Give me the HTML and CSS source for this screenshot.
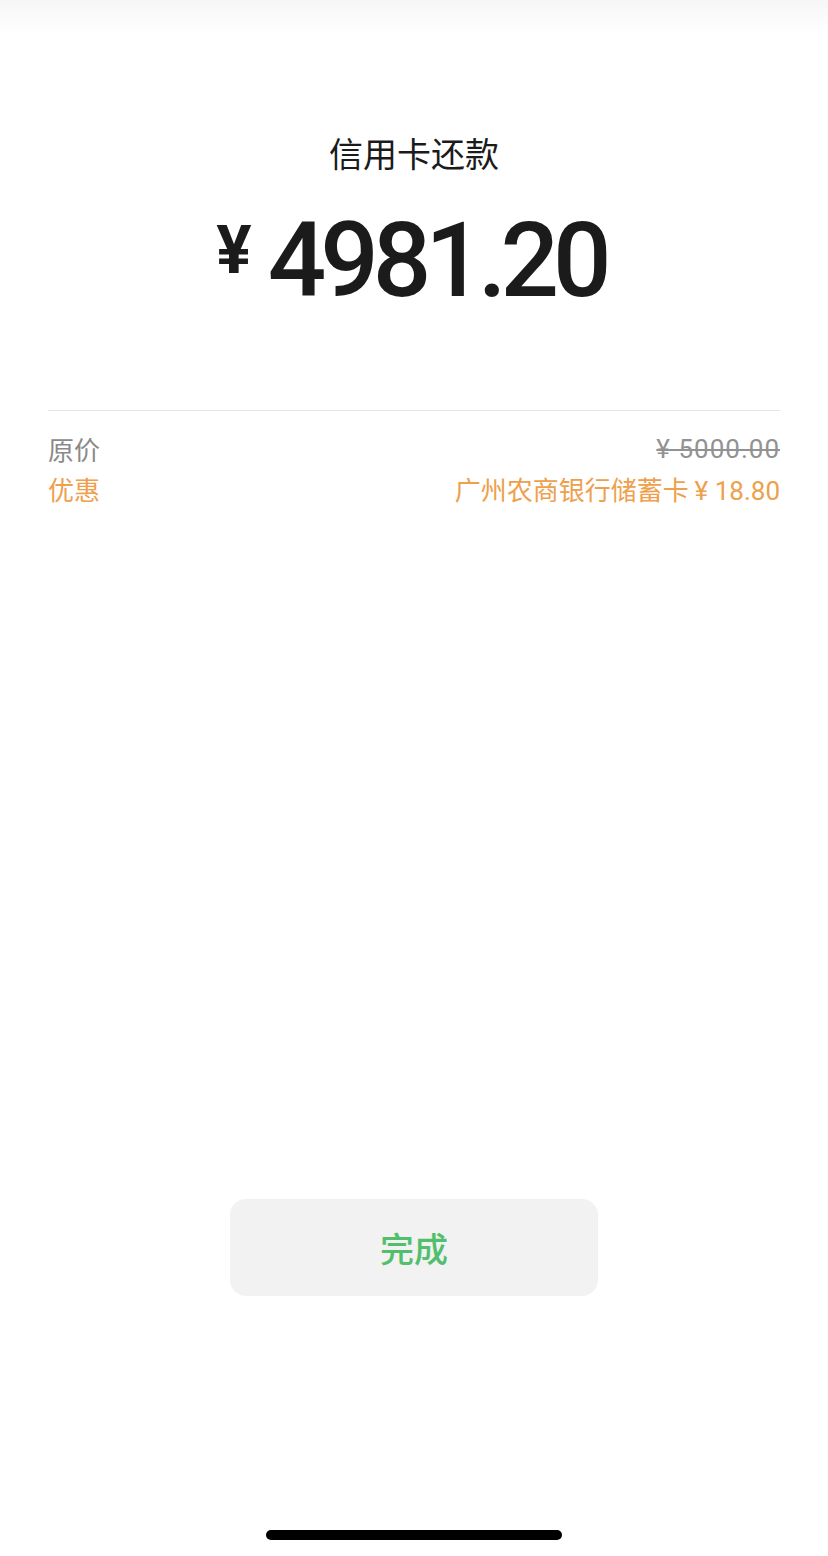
FILE: index.html
```html
<!DOCTYPE html>
<html lang="zh">
<head>
    <meta charset="UTF-8">
    <meta name="viewport" content="width=device-width, initial-scale=1.0">
    <title>信用卡还款</title>
    <link rel="stylesheet" href="styles.css">
</head>
<body>
    <div class="page">
        <div class="top-shade"></div>

        <div class="resumo">
            <h1 class="titulo">信用卡还款</h1>
            <div class="valor"><span class="moeda">¥</span><span class="numero">4981.20</span></div>
        </div>

        <div class="detalhes">
            <div class="linha">
                <span class="rotulo">原价</span>
                <span class="original">¥ 5000.00</span>
            </div>
            <div class="linha desconto">
                <span class="rotulo">优惠</span>
                <span>广州农商银行储蓄卡 <span class="cifra">¥ 18.80</span></span>
            </div>
        </div>

        <div class="acoes">
            <button class="concluir">完成</button>
        </div>

        <div class="home-bar"></div>
    </div>
</body>
</html>
```

FILE: styles.css
```css
html, body {
    margin: 0;
    padding: 0;
    background: #ffffff;
}

body {
    font-family: "Noto Sans CJK SC", "Noto Sans", sans-serif;
    color: #1b1b1b;
}

.page {
    width: 828px;
    height: 1556px;
    display: flex;
    flex-direction: column;
    position: relative;
}

.top-shade {
    position: absolute;
    top: 0;
    left: 0;
    right: 0;
    height: 34px;
    background: linear-gradient(#f6f6f6, rgba(255, 255, 255, 0));
}

.resumo {
    padding-top: 128px;
    text-align: center;
}

.titulo {
    margin: 0;
    font-size: 34px;
    font-weight: 400;
    line-height: 50px;
    color: #1b1b1b;
}

.valor {
    margin-top: 28px;
    display: flex;
    justify-content: center;
    align-items: baseline;
    height: 110px;
    font-family: Roboto, sans-serif;
    font-weight: 500;
}

.moeda {
    font-size: 66px;
    font-weight: bold;
    position: relative;
    top: -23px;
    margin-right: 16px;
}

.numero {
    font-size: 103px;
    line-height: 110px;
    letter-spacing: -6px;
    margin-right: 6px;
}

.detalhes {
    margin: 94px 48px 0;
    border-top: 1px solid #e5e5e5;
    padding-top: 18px;
}

.linha {
    display: flex;
    justify-content: space-between;
    font-size: 26px;
    line-height: 40px;
    color: #8a8a8a;
}

.original,
.cifra {
    font-family: Roboto, sans-serif;
}

.original {
    color: #929292;
    letter-spacing: 1px;
    text-decoration: line-through;
    text-decoration-thickness: 2px;
}

.desconto {
    color: #eea04c;
}

.acoes {
    margin-top: auto;
    margin-bottom: 260px;
    display: flex;
    justify-content: center;
}

.concluir {
    width: 368px;
    height: 97px;
    border: none;
    border-radius: 16px;
    background: #f2f2f2;
    color: #52bf6c;
    font-family: "Noto Sans CJK SC", sans-serif;
    font-size: 34px;
    font-weight: 500;
}

.home-bar {
    position: absolute;
    left: 266px;
    top: 1530px;
    width: 296px;
    height: 10px;
    border-radius: 5px;
    background: #000000;
}
```
